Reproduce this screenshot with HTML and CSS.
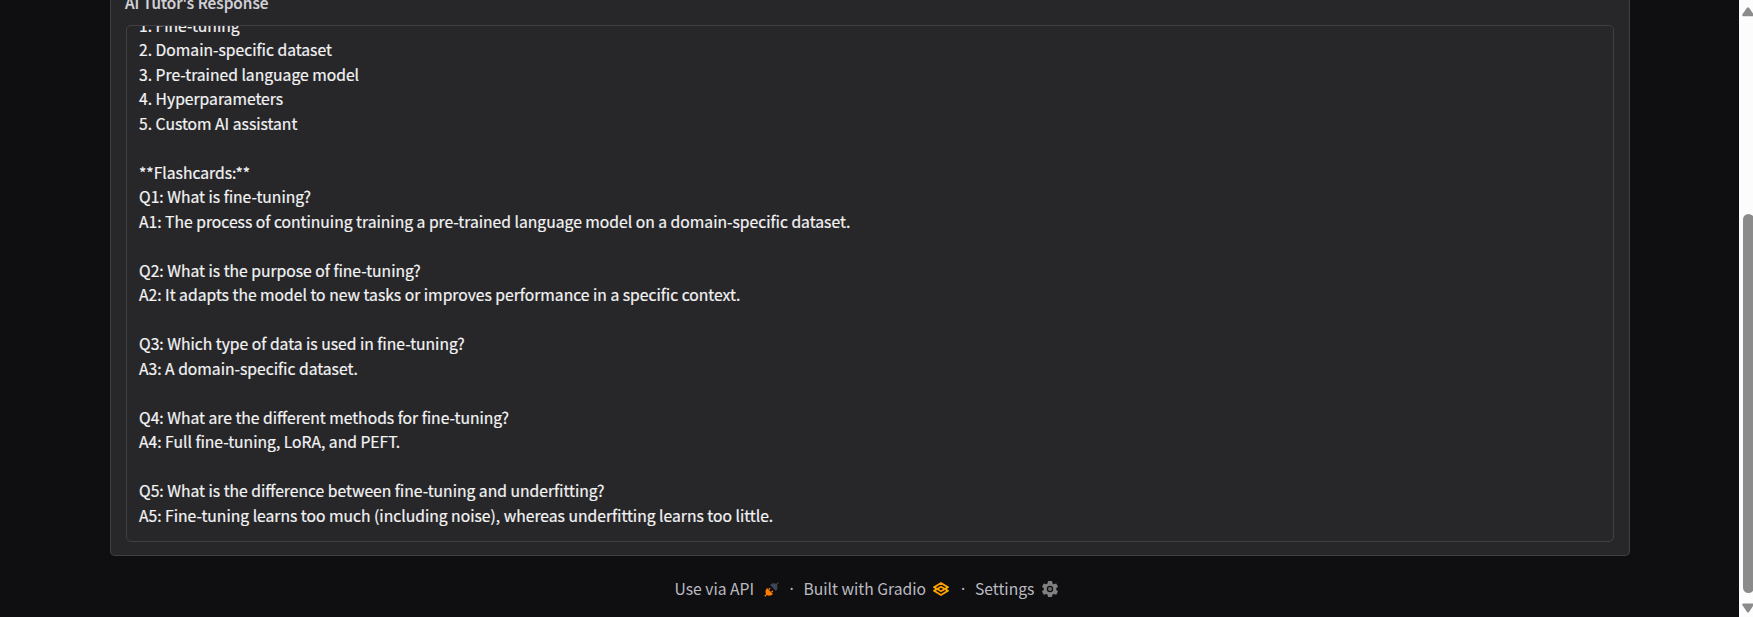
FILE: index.html
```
<!DOCTYPE html>
<html lang="en">
<head>
<meta charset="utf-8">
<title>AI Tutor</title>
<link rel="stylesheet" href="styles.css">
</head>
<body>
<div class="app">
<main class="page">
<section class="panel">
<div class="label">AI Tutor's Response</div>
<div class="output"><div class="content"><div>1. Fine-tuning</div><div>2. Domain-specific dataset</div><div>3. Pre-trained language model</div><div>4. Hyperparameters</div><div>5. Custom AI assistant</div><br><div>**Flashcards:**</div><div>Q1: What is fine-tuning?</div><div>A1: The process of continuing training a pre-trained language model on a domain-specific dataset.</div><br><div>Q2: What is the purpose of fine-tuning?</div><div>A2: It adapts the model to new tasks or improves performance in a specific context.</div><br><div>Q3: Which type of data is used in fine-tuning?</div><div>A3: A domain-specific dataset.</div><br><div>Q4: What are the different methods for fine-tuning?</div><div>A4: Full fine-tuning, LoRA, and PEFT.</div><br><div>Q5: What is the difference between fine-tuning and underfitting?</div><div>A5: Fine-tuning learns too much (including noise), whereas underfitting learns too little.</div></div></div>
</section>
<footer class="footer">
<span class="link api">Use via API</span>
<svg class="icon rocket" viewBox="0 0 16 16"><path d="M.8 15.200l2.500-2.500" stroke="#ff7c00" stroke-width="1.400"/><path d="M3.200 6.500l6.300 6.300c-2 2.200-5 2.400-6.700.7S1 8.700 3.200 6.500z" fill="#ff7c00"/><path d="M5 8l1.500-1.500M8 11l1.500-1.500" stroke="#ff7c00" stroke-width="1.400"/><path d="M12.800 9.500L6.500 3.200c2-2.200 5-2.400 6.700-.7s1.800 4.800-.4 7z" fill="#3c4657"/><path d="M15.200.8l-2.500 2.500" stroke="#3c4657" stroke-width="1.400"/></svg>
<span class="dot">·</span>
<span class="link built">Built with Gradio</span>
<svg class="icon gradio" viewBox="0 0 16 14"><defs><linearGradient id="g" x1="0" y1="0" x2="1" y2="0"><stop offset="0" stop-color="#ffb000"/><stop offset=".45" stop-color="#ff9200"/><stop offset="1" stop-color="#ffb400"/></linearGradient></defs><g fill="none" stroke="url(#g)" stroke-width="1.900" stroke-linejoin="round"><path d="M8 1L1.100 5.200 8 9.300 14.900 5.200z"/><path d="M8 4.700L1.100 8.800 8 13 14.900 8.800z"/></g></svg>
<span class="dot dot2">·</span>
<span class="link settings">Settings</span>
<svg class="icon gear" viewBox="0 0 16 16"><path fill="#808080" fill-rule="evenodd" d="M6 0h4l.5 2.500 1.300.7 2.400-.8 1.800 3.300L14.200 7.300v1.500L16 10.400l-1.800 3.300-2.400-.8-1.300.7L10 16H6l-.5-2.400-1.300-.7-2.400.8L0 10.400l1.800-1.600V7.300L0 5.700l1.800-3.300 2.400.8 1.300-.7zM8 4.800a3.200 3.200 0 1 0 0 6.400 3.200 3.200 0 0 0 0-6.400z"/><circle cx="8" cy="8" r="2" fill="#6b6b6d"/></svg>
</footer>
</main>
<div class="scrollbar">
<svg class="arrow up" viewBox="0 0 12 10"><path d="M5 .7Q6-.4 7 .7L11.700 7.500Q12 9.300 10.500 9.300H1.500Q0 9.300.3 7.500z" fill="#8b8b8b"/></svg>
<div class="thumb"></div>
<svg class="arrow down" viewBox="0 0 12 10"><path d="M5 9Q6 10 7 9L11.700 2Q12 .4 10.500.4H1.500Q0 .4.3 2z" fill="#8b8b8b"/></svg>
</div>
</div>
</body>
</html>
```
FILE: styles.css
```
* { box-sizing: border-box; }
body {
  margin: 0;
  background: #0f0f11;
  font-family: "Noto Sans CJK SC", "Open Sans", sans-serif;
  overflow: hidden;
}
.app { display: flex; height: 617px; overflow: hidden; }
.page { flex: 1; padding-left: 110px; padding-right: 109px; }
.panel {
  height: 556px;
  padding: 0 15px 13px;
  display: flex;
  flex-direction: column;
  background: #27272a;
  border: 1px solid #3f3f46;
  border-top: 0;
  border-radius: 0 0 5px 5px;
}
.label {
  height: 25px;
  line-height: 24px;
  margin-top: -10px;
  margin-bottom: 10px;
  margin-left: -1px;
  font-size: 15.400px;
  font-weight: 500;
  color: #d4d4d8;
  -webkit-text-stroke: 0.2px #d4d4d8;
  white-space: nowrap;
}
.output {
  flex: 1;
  display: flex;
  flex-direction: column;
  justify-content: flex-end;
  padding: 0 12px 13px;
  border: 1px solid #3f3f46;
  border-radius: 5px;
  overflow: hidden;
}
.content {
  font-size: 15.680px;
  line-height: 24.500px;
  color: #f4f4f5;
  -webkit-text-stroke: 0.2px #f4f4f5;
  white-space: nowrap;
}
.footer {
  display: flex;
  align-items: center;
  height: 24px;
  margin-top: 21px;
  padding-left: 564.500px;
  font-size: 15.680px;
  line-height: 24px;
  color: #bbbbc2;
  white-space: nowrap;
}
.icon { flex: none; display: block; }
.link { flex: none; }
.api { width: 79.500px; }
.rocket { width: 15px; height: 15px; margin-left: 10px; }
.dot {
  flex: none;
  width: 5px;
  margin-left: 10px;
  text-align: center;
  font-family: "Noto Sans", sans-serif;
}
.built { width: 124px; margin-left: 9.500px; }
.gradio { width: 16px; height: 14px; margin: 0 0 1px 5.500px; }
.dot2 { margin-left: 11.500px; }
.settings { width: 60px; margin-left: 9.500px; }
.gear { width: 16px; height: 16px; margin-left: 7px; }
.scrollbar {
  width: 14px;
  padding: 7px 0 4px 3px;
  display: flex;
  flex-direction: column;
  background: #fcfcfc;
  overflow: hidden;
}
.arrow { flex: none; width: 12px; height: 10px; }
.thumb {
  flex: none;
  width: 11px;
  height: 379px;
  margin: 197px 0 10px 1px;
  background: #8b8b8b;
  border-radius: 6px;
}
```
